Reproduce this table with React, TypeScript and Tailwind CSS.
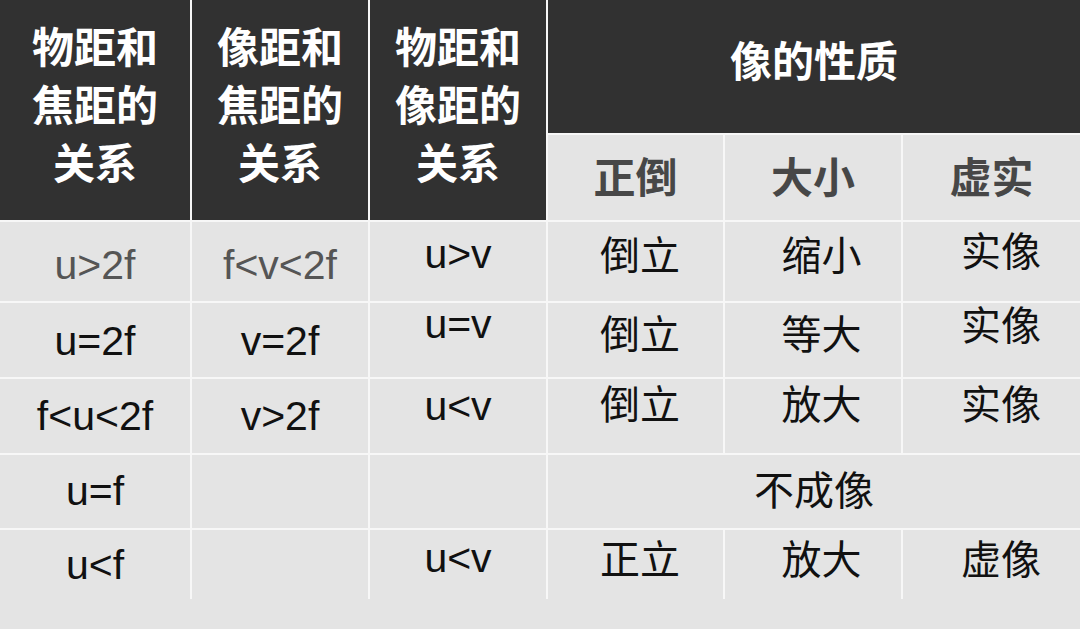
const CJK = "font-['Noto_Sans_CJK_SC',sans-serif]"
const LAT = "font-['Liberation_Sans',Arial,sans-serif]"

type Cell = {
  text: string
  kind: "lat" | "cjk"
  pt: string
  pl?: string
  gray?: boolean
  span?: string
}

const rows: Cell[][] = [
  [
    { text: "u>2f", kind: "lat", pt: "pt-[23px]", gray: true },
    { text: "f<v<2f", kind: "lat", pt: "pt-[23px]", gray: true },
    { text: "u>v", kind: "lat", pt: "pt-[12px]" },
    { text: "倒立", kind: "cjk", pt: "pt-[11px]", pl: "pl-[9px]" },
    { text: "缩小", kind: "cjk", pt: "pt-[11px]", pl: "pl-[17px]" },
    { text: "实像", kind: "cjk", pt: "pt-[7px]", pl: "pl-[19px]" },
  ],
  [
    { text: "u=2f", kind: "lat", pt: "pt-[18px]" },
    { text: "v=2f", kind: "lat", pt: "pt-[18px]" },
    { text: "u=v", kind: "lat", pt: "pt-[1px]" },
    { text: "倒立", kind: "cjk", pt: "pt-[9px]", pl: "pl-[9px]" },
    { text: "等大", kind: "cjk", pt: "pt-[9px]", pl: "pl-[17px]" },
    { text: "实像", kind: "cjk", pt: "pt-0", pl: "pl-[19px]" },
  ],
  [
    { text: "f<u<2f", kind: "lat", pt: "pt-[17px]" },
    { text: "v>2f", kind: "lat", pt: "pt-[17px]" },
    { text: "u<v", kind: "lat", pt: "pt-[7px]" },
    { text: "倒立", kind: "cjk", pt: "pt-[3px]", pl: "pl-[9px]" },
    { text: "放大", kind: "cjk", pt: "pt-[3px]", pl: "pl-[17px]" },
    { text: "实像", kind: "cjk", pt: "pt-[3px]", pl: "pl-[19px]" },
  ],
  [
    { text: "u=f", kind: "lat", pt: "pt-[16px]" },
    { text: "", kind: "lat", pt: "pt-0" },
    { text: "", kind: "lat", pt: "pt-0" },
    { text: "不成像", kind: "cjk", pt: "pt-[13px]", span: "col-span-3" },
  ],
  [
    { text: "u<f", kind: "lat", pt: "pt-[15px]" },
    { text: "", kind: "lat", pt: "pt-0" },
    { text: "u<v", kind: "lat", pt: "pt-[8px]" },
    { text: "正立", kind: "cjk", pt: "pt-[7px]", pl: "pl-[9px]" },
    { text: "放大", kind: "cjk", pt: "pt-[7px]", pl: "pl-[17px]" },
    { text: "虚像", kind: "cjk", pt: "pt-[7px]", pl: "pl-[19px]" },
  ],
]

const heads = [
  ["物距和", "焦距的", "关系"],
  ["像距和", "焦距的", "关系"],
  ["物距和", "像距的", "关系"],
]

export default function App() {
  return (
    <div className="h-[629px] w-[1080px] overflow-hidden bg-[#e4e4e4]">
      <div className="grid grid-cols-[190px_176px_176px_175px_176px_177px] grid-rows-[133px_85px_79px_74px_74px_73px_69px] gap-[2px] bg-[#f7f7f7]">
        {heads.map((lines, i) => (
          <div
            key={i}
            className={`row-span-2 flex flex-col items-center bg-[#313131] pt-[16px] text-[42px] font-bold leading-[58px] text-white ${CJK}`}
          >
            {lines.map(l => (
              <span key={l}>{l}</span>
            ))}
          </div>
        ))}
        <div className={`col-span-3 flex justify-center bg-[#313131] pt-[30px] text-[42px] font-bold leading-[58px] text-white ${CJK}`}>
          像的性质
        </div>
        {["正倒", "大小", "虚实"].map(t => (
          <div
            key={t}
            className={`flex justify-center bg-[#e4e4e4] pt-[11px] text-[42px] font-bold leading-[58px] text-[#474747] ${CJK}`}
          >
            {t}
          </div>
        ))}

        {rows.map((row, r) =>
          row.map((c, i) => (
            <div
              key={`${r}-${i}`}
              className={`flex justify-center bg-[#e4e4e4] leading-[40px] ${c.pt} ${c.pl ?? ""} ${c.span ?? ""} ${
                c.kind === "cjk" ? `text-[40px] ${CJK}` : `text-[41px] ${LAT}`
              } ${c.gray ? "text-[#555555]" : "text-[#111111]"}`}
            >
              {c.text}
            </div>
          ))
        )}
      </div>
    </div>
  )
}
